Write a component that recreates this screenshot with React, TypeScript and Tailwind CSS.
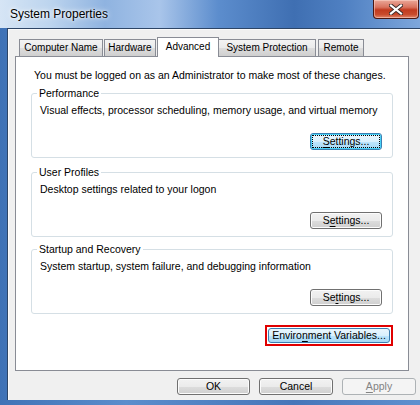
import React from 'react';

const font = "font-['Liberation_Sans',Arial,sans-serif]";

const Mn: React.FC<{ children: React.ReactNode }> = ({ children }) => (
  <span className="underline underline-offset-2 decoration-1">{children}</span>
);

interface BtnProps {
  children: React.ReactNode;
  className?: string;
  focused?: boolean;
  disabled?: boolean;
}

const WinButton: React.FC<BtnProps> = ({ children, className = '', focused, disabled }) => {
  if (disabled) {
    return (
      <div
        className={`flex h-[17px] items-center justify-center rounded-[3px] border border-[#adb2b5] bg-[#f4f4f4] text-[10.5px] text-[#838383] ${className}`}
      >
        {children}
      </div>
    );
  }
  if (focused) {
    return (
      <div
        className={`flex h-[17px] items-center justify-center rounded-[3px] border border-[#3c7fb1] bg-[linear-gradient(to_bottom,#eaf6fd_0%,#d9f0fc_50%,#bee6fd_51%,#a7d9f5_100%)] p-[1px] text-[10.5px] text-black shadow-[inset_0_0_0_1px_#48d2f8] ${className}`}
      >
        <div className="flex h-full w-full items-center justify-center border border-dotted border-black">
          {children}
        </div>
      </div>
    );
  }
  return (
    <div
      className={`flex h-[17px] items-center justify-center rounded-[3px] border border-[#707070] bg-[linear-gradient(to_bottom,#f2f2f2_0%,#ebebeb_50%,#dddddd_51%,#cfcfcf_100%)] text-[10.5px] text-black shadow-[inset_0_0_0_1px_#fcfcfc] ${className}`}
    >
      {children}
    </div>
  );
};

interface GroupProps {
  title: string;
  text: string;
  button: React.ReactNode;
  className?: string;
}

const GroupBox: React.FC<GroupProps> = ({ title, text, button, className = '' }) => (
  <div className={`relative mx-[15px] h-[65px] rounded-[3px] border border-[#d5dfe5] ${className}`}>
    <div className="absolute left-[5px] top-[-8px] whitespace-nowrap bg-white px-[2px] text-[10.5px] leading-[14px] text-black">
      {title}
    </div>
    <div className="flex h-full flex-col px-[8px] pb-[7px] pt-[9px]">
      <div className="whitespace-nowrap text-[10.5px] leading-[14px] text-black">{text}</div>
      <div className="mt-auto flex justify-end pr-[2px]">{button}</div>
    </div>
  </div>
);

const tabs = [
  { label: 'Computer Name', w: 84, ml: 0 },
  { label: 'Hardware', w: 52, ml: 1 },
  { label: 'Advanced', w: 62, ml: 1, active: true },
  { label: 'System Protection', w: 98, ml: -1 },
  { label: 'Remote', w: 46, ml: 2 },
];

export default function App() {
  return (
    <div
      className={`relative h-[405px] w-[420px] overflow-hidden bg-[linear-gradient(to_right,#3f72b6_0%,#5b8dcc_30%,#4676b9_70%,#5f90cf_100%)] ${font}`}
    >
      {/* title bar */}
      <div className="flex h-[28px] bg-[linear-gradient(to_right,#d6e5f5_0%,#bcd4ee_12%,#8fb3e0_25%,#a9c5ea_38%,#5c8dcd_52%,#3f6fb2_70%,#4f80c2_82%,#7ea7dc_100%)]">
        <div className="whitespace-nowrap pl-[10px] pt-[5px] text-[12px] leading-[18px] text-black [text-shadow:0_0_6px_#ffffff,0_0_3px_#ffffff]">
          System Properties
        </div>
        <div className="ml-auto mr-[1px] flex h-[19px] w-[46px] items-center justify-center rounded-b-[4px] border border-t-0 border-[#4a1712] bg-[linear-gradient(to_bottom,#eaa899_0%,#d9735f_40%,#c13a1f_55%,#c84a2c_80%,#e0856a_100%)] shadow-[inset_0_0_0_1px_rgba(255,220,210,0.5)]">
          <svg width="14" height="11" viewBox="0 0 14 11">
            <path d="M2 1.5 L12 9.5 M12 1.5 L2 9.5" stroke="#3a2a28" strokeWidth="4" strokeLinecap="square" />
            <path d="M2 1.5 L12 9.5 M12 1.5 L2 9.5" stroke="#ffffff" strokeWidth="2.2" strokeLinecap="square" />
          </svg>
        </div>
      </div>

      {/* client area */}
      <div className="ml-[7px] flex h-[372px] flex-col border-l border-t border-[#2d4566] bg-[#f0f0f0]">
        <div className="flex h-[372px] flex-col border-l border-t border-[#ffffff]/70 pl-[6px]">
          {/* tabs */}
          <div className="mt-[7px] flex h-[19px] items-end pl-[4px]">
            {tabs.map((t) =>
              t.active ? (
                <div
                  key={t.label}
                  className="relative z-10 mb-[-1px] flex h-[20px] items-start justify-center whitespace-nowrap border border-b-0 border-[#898c95] bg-white pt-[2px] text-[10px] leading-[14px] text-black"
                  style={{ width: t.w, marginLeft: t.ml }}
                >
                  {t.label}
                </div>
              ) : (
                <div
                  key={t.label}
                  className="flex h-[17px] items-center justify-center whitespace-nowrap border border-b-0 border-[#898c95] bg-[linear-gradient(to_bottom,#f3f3f3_0%,#ebebeb_50%,#dddddd_51%,#cfcfcf_100%)] text-[10px] leading-[14px] text-black"
                  style={{ width: t.w, marginLeft: t.ml }}
                >
                  {t.label}
                </div>
              )
            )}
          </div>

          {/* panel */}
          <div className="flex h-[315px] w-[394px] flex-col border border-[#898c95] bg-white">
            <div className="ml-[18px] mt-[11px] whitespace-nowrap text-[10.5px] leading-[14px] text-black">
              You must be logged on as an Administrator to make most of these changes.
            </div>
            <GroupBox
              className="mt-[11px]"
              title="Performance"
              text="Visual effects, processor scheduling, memory usage, and virtual memory"
              button={
                <WinButton focused className="w-[72px]">
                  <Mn>S</Mn>ettings...
                </WinButton>
              }
            />
            <GroupBox
              className="mt-[14px]"
              title="User Profiles"
              text="Desktop settings related to your logon"
              button={
                <WinButton className="w-[72px]">
                  S<Mn>e</Mn>ttings...
                </WinButton>
              }
            />
            <GroupBox
              className="mt-[12px]"
              title="Startup and Recovery"
              text="System startup, system failure, and debugging information"
              button={
                <WinButton className="w-[72px]">
                  Se<Mn>t</Mn>tings...
                </WinButton>
              }
            />
            <div className="mr-[15px] mt-[11px] flex justify-end">
              <div className="border-2 border-[#e00000] p-[1px]">
                <div className="flex h-[15px] w-[122px] items-center justify-center rounded-[3px] border border-[#3c7fb1] bg-[linear-gradient(to_bottom,#eaf6fd_0%,#d9f0fc_50%,#bee6fd_51%,#a7d9f5_100%)] text-[10.5px] text-black">
                  Enviro<Mn>n</Mn>ment Variables...
                </div>
              </div>
            </div>
          </div>

          {/* bottom buttons */}
          <div className="mt-[7px] flex gap-[9px] pl-[162px]">
            <WinButton className="w-[73px]">OK</WinButton>
            <WinButton className="w-[74px]">Cancel</WinButton>
            <WinButton disabled className="w-[74px]">
              <Mn>A</Mn>pply
            </WinButton>
          </div>
        </div>
      </div>
    </div>
  );
}
